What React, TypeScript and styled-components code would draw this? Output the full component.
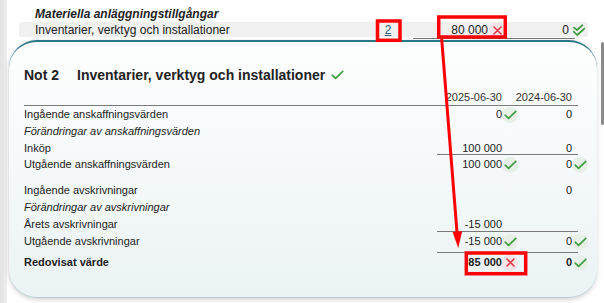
import React from 'react';
import styled, { createGlobalStyle } from 'styled-components';

const Global = createGlobalStyle`
  html, body { margin: 0; padding: 0; background: #fff; }
  body {
    font-family: "Liberation Sans", Arial, sans-serif;
    color: #222;
    width: 604px;
    height: 303px;
    overflow: hidden;
  }
`;

const Frame = styled.div`
  position: relative;
  display: flex;
  width: 604px;
  height: 303px;
  overflow: hidden;
`;

const SideStrip = styled.div`
  flex: none;
  width: 7px;
  background: linear-gradient(to right, #e2e2e2, #eeeeee);
`;

const Main = styled.main`
  flex: 1;
  min-width: 0;
  padding: 6px 0 0 2px;
  display: flex;
  flex-direction: column;
`;

const ScrollTrack = styled.div`
  flex: none;
  width: 7px;
  display: flex;
  justify-content: flex-end;
  padding-top: 42px;
  box-sizing: border-box;
`;

const ScrollThumb = styled.div`
  width: 3px;
  height: 83px;
  border-radius: 2px;
  background: #8a8a8a;
`;

const SectionHeading = styled.div`
  padding-left: 26px;
  font-size: 12px;
  line-height: 16px;
  font-weight: 700;
  font-style: italic;
  color: #1e1e1e;
`;

const AccountRow = styled.div`
  margin: 0 9px 0 10px;
  padding-left: 16px;
  display: grid;
  grid-template-columns: 1fr 40px 98px 82px;
  align-items: center;
  height: 15px;
  background: #f0f0f0;
  border-radius: 3px;
  font-size: 12px;
`;

const NoteLink = styled.a`
  justify-self: center;
  color: #2b5d78;
  text-decoration: underline;
  font-size: 12px;
`;

const Cell = styled.div<{ $bold?: boolean }>`
  display: flex;
  justify-content: flex-end;
  align-items: center;
  font-weight: ${p => (p.$bold ? 700 : 400)};
  white-space: nowrap;
`;

const IconSlot = styled.span<{ $w?: number }>`
  flex: none;
  width: ${p => p.$w ?? 16}px;
  display: flex;
  justify-content: center;
  align-items: center;
`;

const Badge = styled.span<{ $tone: 'ok' | 'bad' }>`
  width: 16px;
  height: 16px;
  border-radius: 50%;
  display: flex;
  align-items: center;
  justify-content: center;
  background: ${p => (p.$tone === 'ok' ? '#e6f0e7' : '#f5e3e5')};
`;

const TopRule = styled.div`
  width: 162px;
  height: 1px;
  margin: 1px 22px 0 auto;
  background: #777;
`;

const Card = styled.section`
  margin-top: 1px;
  padding: 25px 9px 26px 15px;
  border-top: 2px solid #2a7786;
  border-bottom: 1px solid #b4ccd2;
  border-radius: 28px;
  background: linear-gradient(to bottom, #fdfefe 0%, #f4f8f9 55%, #ebf3f5 100%);
  box-shadow: 0 2px 5px rgba(0, 0, 0, 0.16), -1px 0 2px rgba(0, 0, 0, 0.06);
  font-size: 11px;
  color: #222;
`;

const TitleRow = styled.h2`
  margin: 0;
  display: flex;
  align-items: center;
  font-size: 14px;
  line-height: 16px;
  font-weight: 700;
  color: #222;
`;

const NoteNo = styled.span`
  width: 53px;
`;

const TitleCheck = styled.span`
  margin-left: 6px;
  display: flex;
  align-items: center;
`;

const Row = styled.div<{ $mt?: number; $bold?: boolean }>`
  display: grid;
  grid-template-columns: 1fr 81px 70px;
  align-items: center;
  height: 17px;
  line-height: 17px;
  margin-top: ${p => p.$mt ?? 0}px;
  font-weight: ${p => (p.$bold ? 700 : 400)};
`;

const Label = styled.div<{ $italic?: boolean }>`
  font-style: ${p => (p.$italic ? 'italic' : 'normal')};
  white-space: nowrap;
`;

const HeaderRow = styled(Row)`
  color: #333;
`;

const Rule = styled.div<{ $full?: boolean; $mt?: number }>`
  height: 1px;
  background: #7a7a7a;
  width: ${p => (p.$full ? 'auto' : '141px')};
  margin: ${p => p.$mt ?? 0}px 10px 0 ${p => (p.$full ? '0' : 'auto')};
`;

const Overlay = styled.svg`
  position: absolute;
  inset: 0;
  pointer-events: none;
`;

const Check = () => (
  <svg width="13" height="10" viewBox="0 0 13 10">
    <path d="M1.2 5.2 L4.6 8.4 L11.8 1.4" fill="none" stroke="#3d9a3d" strokeWidth="1.6" strokeLinecap="round" strokeLinejoin="round" />
  </svg>
);

const DoubleCheck = () => (
  <svg width="14" height="13" viewBox="0 0 14 13">
    <path d="M2 3.6 L5 6 L10.5 1.2" fill="none" stroke="#3d9a3d" strokeWidth="1.7" strokeLinecap="round" strokeLinejoin="round" />
    <path d="M1.6 7.6 L5.2 11 L12.4 4.6" fill="none" stroke="#3d9a3d" strokeWidth="1.7" strokeLinecap="round" strokeLinejoin="round" />
  </svg>
);

const Cross = () => (
  <svg width="9" height="9" viewBox="0 0 9 9">
    <path d="M1 1 L8 8 M8 1 L1 8" fill="none" stroke="#e03a48" strokeWidth="1.6" strokeLinecap="round" />
  </svg>
);

type Mark = 'ok' | 'bad' | undefined;

const Value: React.FC<{ v?: string; mark?: Mark; bold?: boolean }> = ({ v, mark, bold }) => (
  <Cell $bold={bold}>
    <span>{v ?? ''}</span>
    <IconSlot>
      {mark && <Badge $tone={mark}>{mark === 'ok' ? <Check /> : <Cross />}</Badge>}
    </IconSlot>
  </Cell>
);

type Line = {
  label: string;
  italic?: boolean;
  bold?: boolean;
  cur?: string;
  curMark?: Mark;
  prev?: string;
  prevMark?: Mark;
  mt?: number;
};

const NoteLine: React.FC<{ l: Line }> = ({ l }) => (
  <Row $mt={l.mt} $bold={l.bold}>
    <Label $italic={l.italic}>{l.label}</Label>
    <Value v={l.cur} mark={l.curMark} bold={l.bold} />
    <Value v={l.prev} mark={l.prevMark} bold={l.bold} />
  </Row>
);

export default function App() {
  return (
    <Frame>
      <Global />
      <SideStrip />
      <Main>
        <SectionHeading>Materiella anläggningstillgångar</SectionHeading>
        <AccountRow>
          <Label>Inventarier, verktyg och installationer</Label>
          <NoteLink href="#">2</NoteLink>
          <Cell>
            <span>80 000</span>
            <IconSlot $w={18}>
              <Badge $tone="bad"><Cross /></Badge>
            </IconSlot>
          </Cell>
          <Cell>
            <span>0</span>
            <IconSlot $w={19}>
              <DoubleCheck />
            </IconSlot>
          </Cell>
        </AccountRow>
        <TopRule />
        <Card>
          <TitleRow>
            <NoteNo>Not 2</NoteNo>
            <span>Inventarier, verktyg och installationer</span>
            <TitleCheck><Check /></TitleCheck>
          </TitleRow>
          <HeaderRow $mt={6}>
            <Label />
            <Value v="2025-06-30" />
            <Value v="2024-06-30" />
          </HeaderRow>
          <Rule $full $mt={-1} />
          <NoteLine l={{ label: 'Ingående anskaffningsvärden', cur: '0', curMark: 'ok', prev: '0' }} />
          <NoteLine l={{ label: 'Förändringar av anskaffningsvärden', italic: true }} />
          <NoteLine l={{ label: 'Inköp', cur: '100 000', prev: '0' }} />
          <Rule $mt={-3} />
          <NoteLine l={{ label: 'Utgående anskaffningsvärden', cur: '100 000', curMark: 'ok', prev: '0', prevMark: 'ok', mt: 1 }} />
          <NoteLine l={{ label: 'Ingående avskrivningar', prev: '0', mt: 9 }} />
          <NoteLine l={{ label: 'Förändringar av avskrivningar', italic: true }} />
          <NoteLine l={{ label: 'Årets avskrivningar', cur: '-15 000' }} />
          <Rule $mt={-2} />
          <NoteLine l={{ label: 'Utgående avskrivningar', cur: '-15 000', curMark: 'ok', prev: '0', prevMark: 'ok', mt: 1 }} />
          <Rule $mt={2} />
          <NoteLine l={{ label: 'Redovisat värde', bold: true, cur: '85 000', curMark: 'bad', prev: '0', prevMark: 'ok', mt: 1 }} />
        </Card>
      </Main>
      <ScrollTrack>
        <ScrollThumb />
      </ScrollTrack>
      <Overlay width="604" height="303" viewBox="0 0 604 303">
        <g fill="none" stroke="#ff0000" strokeWidth="3.5">
          <rect x="377.5" y="21" width="22.5" height="19.3" />
          <rect x="438.7" y="17" width="66.6" height="20" />
          <rect x="466.3" y="253" width="59.4" height="20.7" />
        </g>
        <line x1="441.7" y1="39" x2="457.2" y2="235" stroke="#ff0000" strokeWidth="3" />
        <polygon points="458.2,248 452.6,232 462.2,231.3" fill="#ff0000" />
      </Overlay>
    </Frame>
  );
}
